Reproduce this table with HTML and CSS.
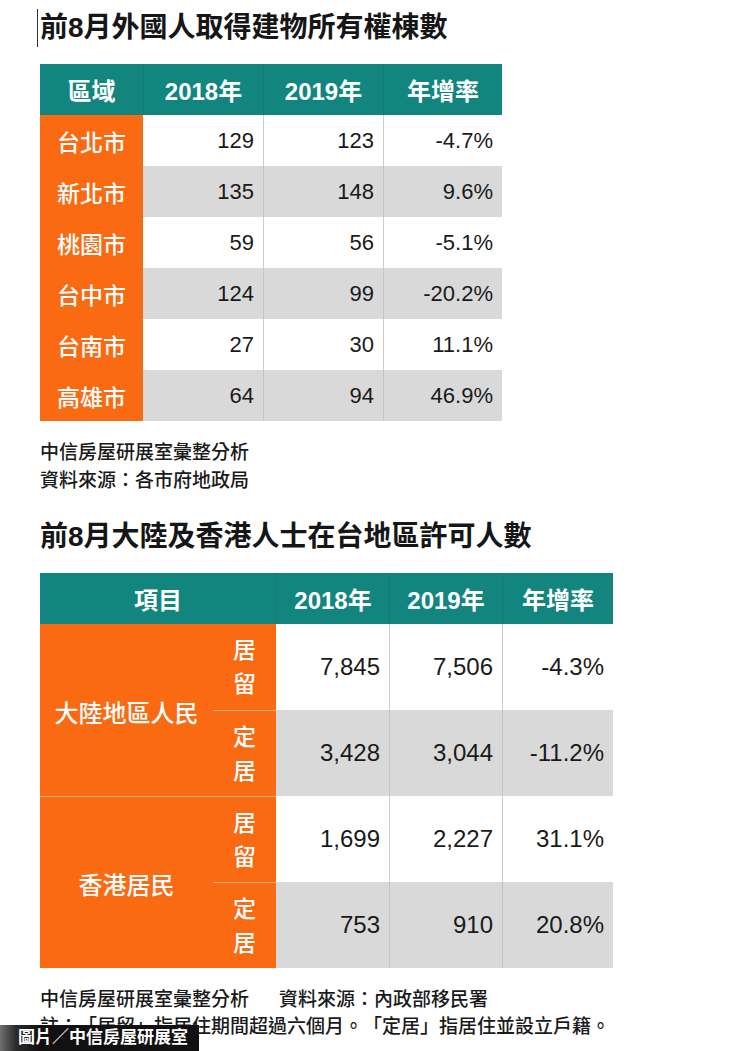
FILE: index.html
```html
<!DOCTYPE html>
<html lang="zh-Hant">
<head>
<meta charset="utf-8">
<title>前8月外國人取得建物所有權棟數</title>
<link rel="stylesheet" href="styles.css">
</head>
<body>
<div class="page">
  <h1 class="title first">前8月外國人取得建物所有權棟數</h1>

  <div class="t1">
    <div class="h">區域</div>
    <div class="h hs">2018年</div>
    <div class="h hs">2019年</div>
    <div class="h hs">年增率</div>

    <div class="lab">台北市</div>
    <div class="num">129</div>
    <div class="num sep">123</div>
    <div class="num sep">-4.7%</div>

    <div class="lab">新北市</div>
    <div class="num g">135</div>
    <div class="num g sep">148</div>
    <div class="num g sep">9.6%</div>

    <div class="lab">桃園市</div>
    <div class="num">59</div>
    <div class="num sep">56</div>
    <div class="num sep">-5.1%</div>

    <div class="lab">台中市</div>
    <div class="num g">124</div>
    <div class="num g sep">99</div>
    <div class="num g sep">-20.2%</div>

    <div class="lab">台南市</div>
    <div class="num">27</div>
    <div class="num sep">30</div>
    <div class="num sep">11.1%</div>

    <div class="lab">高雄市</div>
    <div class="num g">64</div>
    <div class="num g sep">94</div>
    <div class="num g sep">46.9%</div>
  </div>

  <p class="note">中信房屋研展室彙整分析<br>資料來源：各市府地政局</p>

  <h2 class="title second">前8月大陸及香港人士在台地區許可人數</h2>

  <div class="t2">
    <div class="h span2">項目</div>
    <div class="h hs">2018年</div>
    <div class="h hs">2019年</div>
    <div class="h hs">年增率</div>

    <div class="main">大陸地區人民</div>
    <div class="sub">居<br>留</div>
    <div class="num">7,845</div>
    <div class="num sep">7,506</div>
    <div class="num sep">-4.3%</div>

    <div class="sub line">定<br>居</div>
    <div class="num g">3,428</div>
    <div class="num g sep">3,044</div>
    <div class="num g sep">-11.2%</div>

    <div class="main line">香港居民</div>
    <div class="sub line">居<br>留</div>
    <div class="num">1,699</div>
    <div class="num sep">2,227</div>
    <div class="num sep">31.1%</div>

    <div class="sub line">定<br>居</div>
    <div class="num g">753</div>
    <div class="num g sep">910</div>
    <div class="num g sep">20.8%</div>
  </div>

  <p class="note note2">中信房屋研展室彙整分析<span class="gap">資料來源：內政部移民署</span><br>註：「居留」指居住期間超過六個月。「定居」指居住並設立戶籍。</p>

  <div class="badge">圖片／中信房屋研展室</div>
</div>
</body>
</html>
```

FILE: styles.css
```css
* {
  box-sizing: border-box;
}

body {
  margin: 0;
  background: #ffffff;
  font-family: "Liberation Sans", "Noto Sans CJK TC", sans-serif;
  color: #1a1a1a;
  text-spacing-trim: space-all;
}

.page {
  position: relative;
  height: 1051px;
  overflow: hidden;
  padding-left: 40px;
  padding-top: 9px;
}

.title {
  margin: 0;
  font-size: 28px;
  line-height: 38px;
  font-weight: 700;
  color: #161616;
}

.title.first {
  margin-left: -3px;
  padding-left: 2px;
  border-left: 1px solid #333333;
}

.title.second {
  margin-top: 23px;
}

.t1,
.t2 {
  display: grid;
  margin-top: 17px;
}

.t1 {
  grid-template-columns: 103px 120px 120px 119px;
  grid-auto-rows: 51px;
  width: 462px;
}

.t2 {
  grid-template-columns: 173px 63px 113px 113px 111px;
  grid-template-rows: 51px repeat(4, 86px);
  width: 573px;
}

.h {
  background: #12857f;
  color: #ffffff;
  font-weight: 700;
  font-size: 24px;
  display: flex;
  align-items: center;
  justify-content: center;
}

.hs {
  border-left: 1px solid rgba(0, 0, 0, 0.08);
}

.span2 {
  grid-column: span 2;
}

.lab {
  background: #f96a12;
  color: #ffffff;
  font-size: 23px;
  font-weight: 500;
  display: flex;
  align-items: center;
  justify-content: center;
}

.num {
  display: flex;
  align-items: center;
  justify-content: flex-end;
  padding-right: 9px;
  font-size: 22px;
  color: #1a1a1a;
  background: #ffffff;
}

.t2 .num {
  font-size: 24px;
}

.num.g {
  background: #d9d9d9;
}

.sep {
  border-left: 1px solid #cdcdcd;
}

.num.g.sep {
  border-left-color: #c4c4c4;
}

.main {
  grid-row: span 2;
  background: #f96a12;
  color: #ffffff;
  font-size: 24px;
  font-weight: 500;
  display: flex;
  align-items: center;
  justify-content: center;
  padding-top: 2px;
}

.sub {
  background: #f96a12;
  color: #ffffff;
  font-size: 23px;
  font-weight: 500;
  line-height: 34px;
  display: flex;
  align-items: center;
  justify-content: center;
  text-align: center;
}

.line {
  border-top: 1px solid rgba(255, 255, 255, 0.45);
}

.note {
  margin: 18px 0 0;
  font-size: 19px;
  line-height: 28px;
  font-weight: 500;
  color: #1a1a1a;
}

.note2 {
  line-height: 27px;
}

.gap {
  padding-left: 30px;
}

.badge {
  position: absolute;
  left: 0;
  bottom: 0;
  width: 199px;
  height: 26px;
  padding-left: 18px;
  background: linear-gradient(to right, #707070 0, #2a2a2a 16px, #111111 40px, #111111 100%);
  color: #ffffff;
  font-size: 17px;
  line-height: 26px;
  font-weight: 700;
  white-space: nowrap;
}
```
